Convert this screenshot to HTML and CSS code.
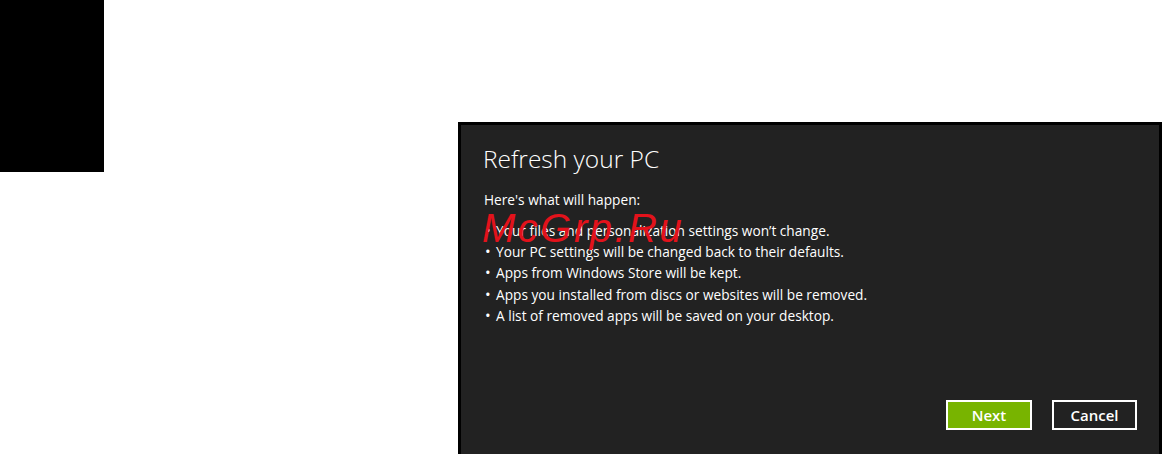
FILE: index.html
```html
<!DOCTYPE html>
<html lang="en">
<head>
  <meta charset="UTF-8" />
  <title>Refresh your PC</title>
  <link rel="stylesheet" href="styles.css">
</head>
<body>
  <div class="pagina">
    <div class="bloco-preto"></div>

    <div class="dialogo">
      <h1 class="titulo">Refresh your PC</h1>
      <p class="intro">Here's what will happen:</p>
      <ul class="lista">
        <li><span class="marca">•</span>Your files and personalization settings won’t change.</li>
        <li><span class="marca">•</span>Your PC settings will be changed back to their defaults.</li>
        <li><span class="marca">•</span>Apps from Windows Store will be kept.</li>
        <li><span class="marca">•</span>Apps you installed from discs or websites will be removed.</li>
        <li><span class="marca">•</span>A list of removed apps will be saved on your desktop.</li>
      </ul>

      <div class="botoes">
        <button class="btn btn-next">Next</button>
        <button class="btn btn-cancel">Cancel</button>
      </div>

      <!-- marca d'agua por cima do texto -->
      <span class="marca-dagua">McGrp.Ru</span>
    </div>
  </div>
</body>
</html>
```

FILE: styles.css
```css
* {
  box-sizing: border-box;
  margin: 0;
  padding: 0;
}

body {
  font-family: "Open Sans", "Noto Sans", Arial, sans-serif;
  background-color: #fff;
  color: #fff;
}

.pagina {
  display: flex;
  align-items: flex-start;
  height: 454px;
  overflow: hidden;
}

.bloco-preto {
  width: 104px;
  height: 172px;
  background-color: #000;
  flex-shrink: 0;
}

/* DIALOGO */
.dialogo {
  position: relative;
  margin-left: 354px;
  margin-top: 122px;
  width: 704px;
  height: 332px;
  border: 3px solid #000;
  border-bottom: none;
  background-color: #222;
  padding: 17px 22px 24px 22px;
  display: flex;
  flex-direction: column;
}

.titulo {
  font-size: 24.5px;
  font-weight: 300;
  line-height: 34px;
}

.intro {
  margin-top: 13px;
  font-size: 13.7px;
  line-height: 21px;
  margin-left: 1px;
}

.lista {
  list-style: none;
  margin-top: 10px;
  font-size: 13.7px;
  line-height: 21.2px;
}

.marca {
  display: inline-block;
  width: 11px;
  margin-left: 2px;
  font-size: 15px;
}

.botoes {
  margin-top: auto;
  display: flex;
  justify-content: flex-end;
  gap: 20px;
}

.btn {
  width: 86px;
  height: 30px;
  border: 2px solid #fff;
  color: #fff;
  font-family: "Open Sans", "Noto Sans", Arial, sans-serif;
  font-size: 15px;
  font-weight: 600;
  cursor: pointer;
}

.btn-next {
  background-color: #78b400;
}

.btn-cancel {
  width: 85px;
  background-color: #222;
}

.marca-dagua {
  position: absolute;
  left: 21px;
  top: 83px;
  font-family: "Liberation Sans", Arial, sans-serif;
  font-style: italic;
  font-size: 40px;
  line-height: 40px;
  letter-spacing: 2.5px;
  color: #e3121b;
}
```
